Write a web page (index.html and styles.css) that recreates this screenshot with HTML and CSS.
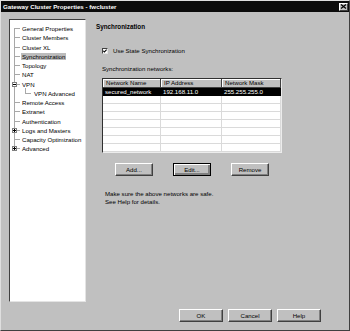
FILE: index.html
```html
<!DOCTYPE html>
<html lang="en">
<head>
    <meta charset="UTF-8">
    <title>Gateway Cluster Properties - fwcluster</title>
    <link rel="stylesheet" href="styles.css">
</head>
<body>
    <div class="window">
        <div class="titlebar">
            <span class="title">Gateway Cluster Properties - fwcluster</span>
            <span class="close">
                <svg width="7" height="5" viewBox="0 0 7 5"><path d="M1 0.5 L6 4.5 M6 0.5 L1 4.5" stroke="#000" stroke-width="1.2"/></svg>
            </span>
        </div>

        <div class="main">
            <div class="tree">
                <ul class="tree-list">
                    <li>General Properties</li>
                    <li>Cluster Members</li>
                    <li>Cluster XL</li>
                    <li class="selected"><span class="label">Synchronization</span></li>
                    <li>Topology</li>
                    <li>NAT</li>
                    <li><span class="exp"></span>VPN</li>
                    <li class="child"><span class="branch"></span>VPN Advanced</li>
                    <li>Remote Access</li>
                    <li>Extranet</li>
                    <li>Authentication</li>
                    <li><span class="exp plus"></span>Logs and Masters</li>
                    <li>Capacity Optimization</li>
                    <li><span class="exp plus"></span>Advanced</li>
                </ul>
            </div>

            <div class="pane">
                <h2>Synchronization</h2>
                <div class="check">
                    <span class="box">
                        <svg width="4" height="4" viewBox="0 0 4 4"><path d="M0.3 1.8 L1.4 3 L3.7 0.6" stroke="#000" stroke-width="1.1" fill="none"/></svg>
                    </span>
                    Use State Synchronization
                </div>
                <div class="caption">Synchronization networks:</div>

                <div class="grid">
                    <div class="grid-head"><span>Network Name</span><span>IP Address</span><span>Network Mask</span></div>
                    <div class="grid-row sel"><span>secured_network</span><span>192.168.11.0</span><span>255.255.255.0</span></div>
                    <div class="grid-row"><span></span><span></span><span></span></div>
                    <div class="grid-row"><span></span><span></span><span></span></div>
                    <div class="grid-row"><span></span><span></span><span></span></div>
                    <div class="grid-row"><span></span><span></span><span></span></div>
                    <div class="grid-row"><span></span><span></span><span></span></div>
                    <div class="grid-row"><span></span><span></span><span></span></div>
                    <div class="grid-row"><span></span><span></span><span></span></div>
                </div>

                <div class="grid-buttons">
                    <button>Add...</button>
                    <button class="default">Edit...</button>
                    <button>Remove</button>
                </div>

                <p class="note">Make sure the above networks are safe.<br>See Help for details.</p>
            </div>
        </div>

        <div class="footer">
            <button>OK</button>
            <button>Cancel</button>
            <button>Help</button>
        </div>
    </div>
</body>
</html>
```

FILE: styles.css
```css
* {
    box-sizing: border-box;
}
body {
    margin: 0;
    background-color: #c0c0c0;
    font-family: "Liberation Sans", Arial, sans-serif;
    font-size: 6.1px;
    color: #000;
}
.window {
    width: 350px;
    height: 331px;
    background-color: #c0c0c0;
    border: 1px solid;
    border-color: #dfdfdf #404040 #404040 #dfdfdf;
    display: flex;
    flex-direction: column;
}
.titlebar {
    height: 11px;
    background-color: #0c0c0c;
    color: #fff;
    display: flex;
    align-items: center;
    justify-content: space-between;
    padding: 0 1px 0 2px;
}
.title {
    font-weight: bold;
    font-size: 6.2px;
}
.close {
    width: 9px;
    height: 8px;
    background-color: #c0c0c0;
    border: 1px solid;
    border-color: #fff #404040 #404040 #fff;
    display: flex;
    align-items: center;
    justify-content: center;
}
.close svg {
    display: block;
}
.main {
    display: flex;
    padding: 7px 0 0 8px;
}

/* tree */
.tree {
    width: 77px;
    height: 283px;
    background-color: #fff;
    border: 1px solid;
    border-color: #404040 #e4e4e4 #e4e4e4 #404040;
    padding: 4px 0 0 4px;
}
.tree-list {
    list-style: none;
    margin: 0;
    padding: 0;
}
.tree-list li {
    position: relative;
    height: 9.25px;
    line-height: 9.25px;
    padding-left: 8px;
    white-space: nowrap;
}
.tree-list li::before {
    content: "";
    position: absolute;
    left: 0;
    top: 4px;
    width: 6px;
    border-top: 1px solid #a8a8a8;
}
.tree-list li::after {
    content: "";
    position: absolute;
    left: 0;
    top: 0;
    bottom: 0;
    border-left: 1px solid #a8a8a8;
}
.tree-list li:first-child::after {
    top: 4px;
}
.tree-list li:last-child::after {
    bottom: 5px;
}
.tree-list li.child {
    padding-left: 20px;
}
.tree-list li.child::before {
    display: none;
}
.branch {
    position: absolute;
    left: 11px;
    top: -1px;
    width: 6px;
    height: 6px;
    border-left: 1px solid #a8a8a8;
    border-bottom: 1px solid #a8a8a8;
}
.exp {
    position: absolute;
    left: -2px;
    top: 2px;
    width: 5px;
    height: 5px;
    background-color: #fff;
    border: 1px solid #808080;
    z-index: 1;
}
.exp::before {
    content: "";
    position: absolute;
    left: 0;
    top: 1px;
    width: 3px;
    height: 1px;
    background-color: #000;
}
.exp.plus::after {
    content: "";
    position: absolute;
    left: 1px;
    top: 0;
    width: 1px;
    height: 3px;
    background-color: #000;
}
.selected .label {
    background-color: #bcbcbc;
    margin-left: -1px;
    padding: 0 1px;
}

/* right pane */
.pane {
    margin-left: 10px;
    width: 230px;
}
.pane h2 {
    margin: 3px 0 0;
    font-size: 6.3px;
    line-height: 9px;
    font-weight: bold;
}
.check {
    display: flex;
    align-items: center;
    height: 9px;
    margin: 15px 0 0 6px;
    gap: 5px;
}
.box {
    width: 6px;
    height: 6px;
    background-color: #fff;
    border: 1px solid;
    border-color: #404040 #e4e4e4 #e4e4e4 #404040;
    display: flex;
    align-items: center;
    justify-content: center;
}
.box svg {
    display: block;
}
.caption {
    margin: 9px 0 0 6px;
    line-height: 9px;
}
.grid {
    margin: 5px 0 0 6px;
    width: 180px;
    height: 75px;
    background-color: #fff;
    border: 1px solid;
    border-color: #303030 #ececec #ececec #303030;
}
.grid-head,
.grid-row {
    display: grid;
    grid-template-columns: 58px 61px 1fr;
}
.grid-head span {
    height: 9px;
    line-height: 8px;
    padding-left: 3px;
    background-color: #c0c0c0;
    border-right: 1px solid #404040;
    border-bottom: 1px solid #404040;
    box-shadow: inset 1px 1px #fff;
    white-space: nowrap;
}
.grid-row span {
    height: 8px;
    line-height: 7px;
    padding-left: 2px;
    border-right: 1px solid #dadada;
    border-bottom: 1px solid #dadada;
    white-space: nowrap;
}
.grid-row.sel span {
    background-color: #000;
    color: #fff;
    border-color: #000;
}
.grid-buttons {
    display: flex;
    justify-content: center;
    gap: 20px;
    width: 180px;
    margin: 10px 0 0 6px;
}
button {
    width: 38px;
    height: 13px;
    padding: 0;
    font-family: inherit;
    font-size: 6.1px;
    color: #000;
    background-color: #c0c0c0;
    border: 1px solid;
    border-color: #fff #404040 #404040 #fff;
    box-shadow: inset -1px -1px #808080;
}
button.default {
    border-color: #000;
    box-shadow: inset 1px 1px #fff, inset -2px -2px #808080;
}
.note {
    margin: 14px 0 0 9px;
    line-height: 8px;
}
.footer {
    display: flex;
    justify-content: flex-end;
    gap: 5px;
    margin-top: 7px;
    padding-right: 28px;
}
.footer button {
    width: 44px;
}
```
